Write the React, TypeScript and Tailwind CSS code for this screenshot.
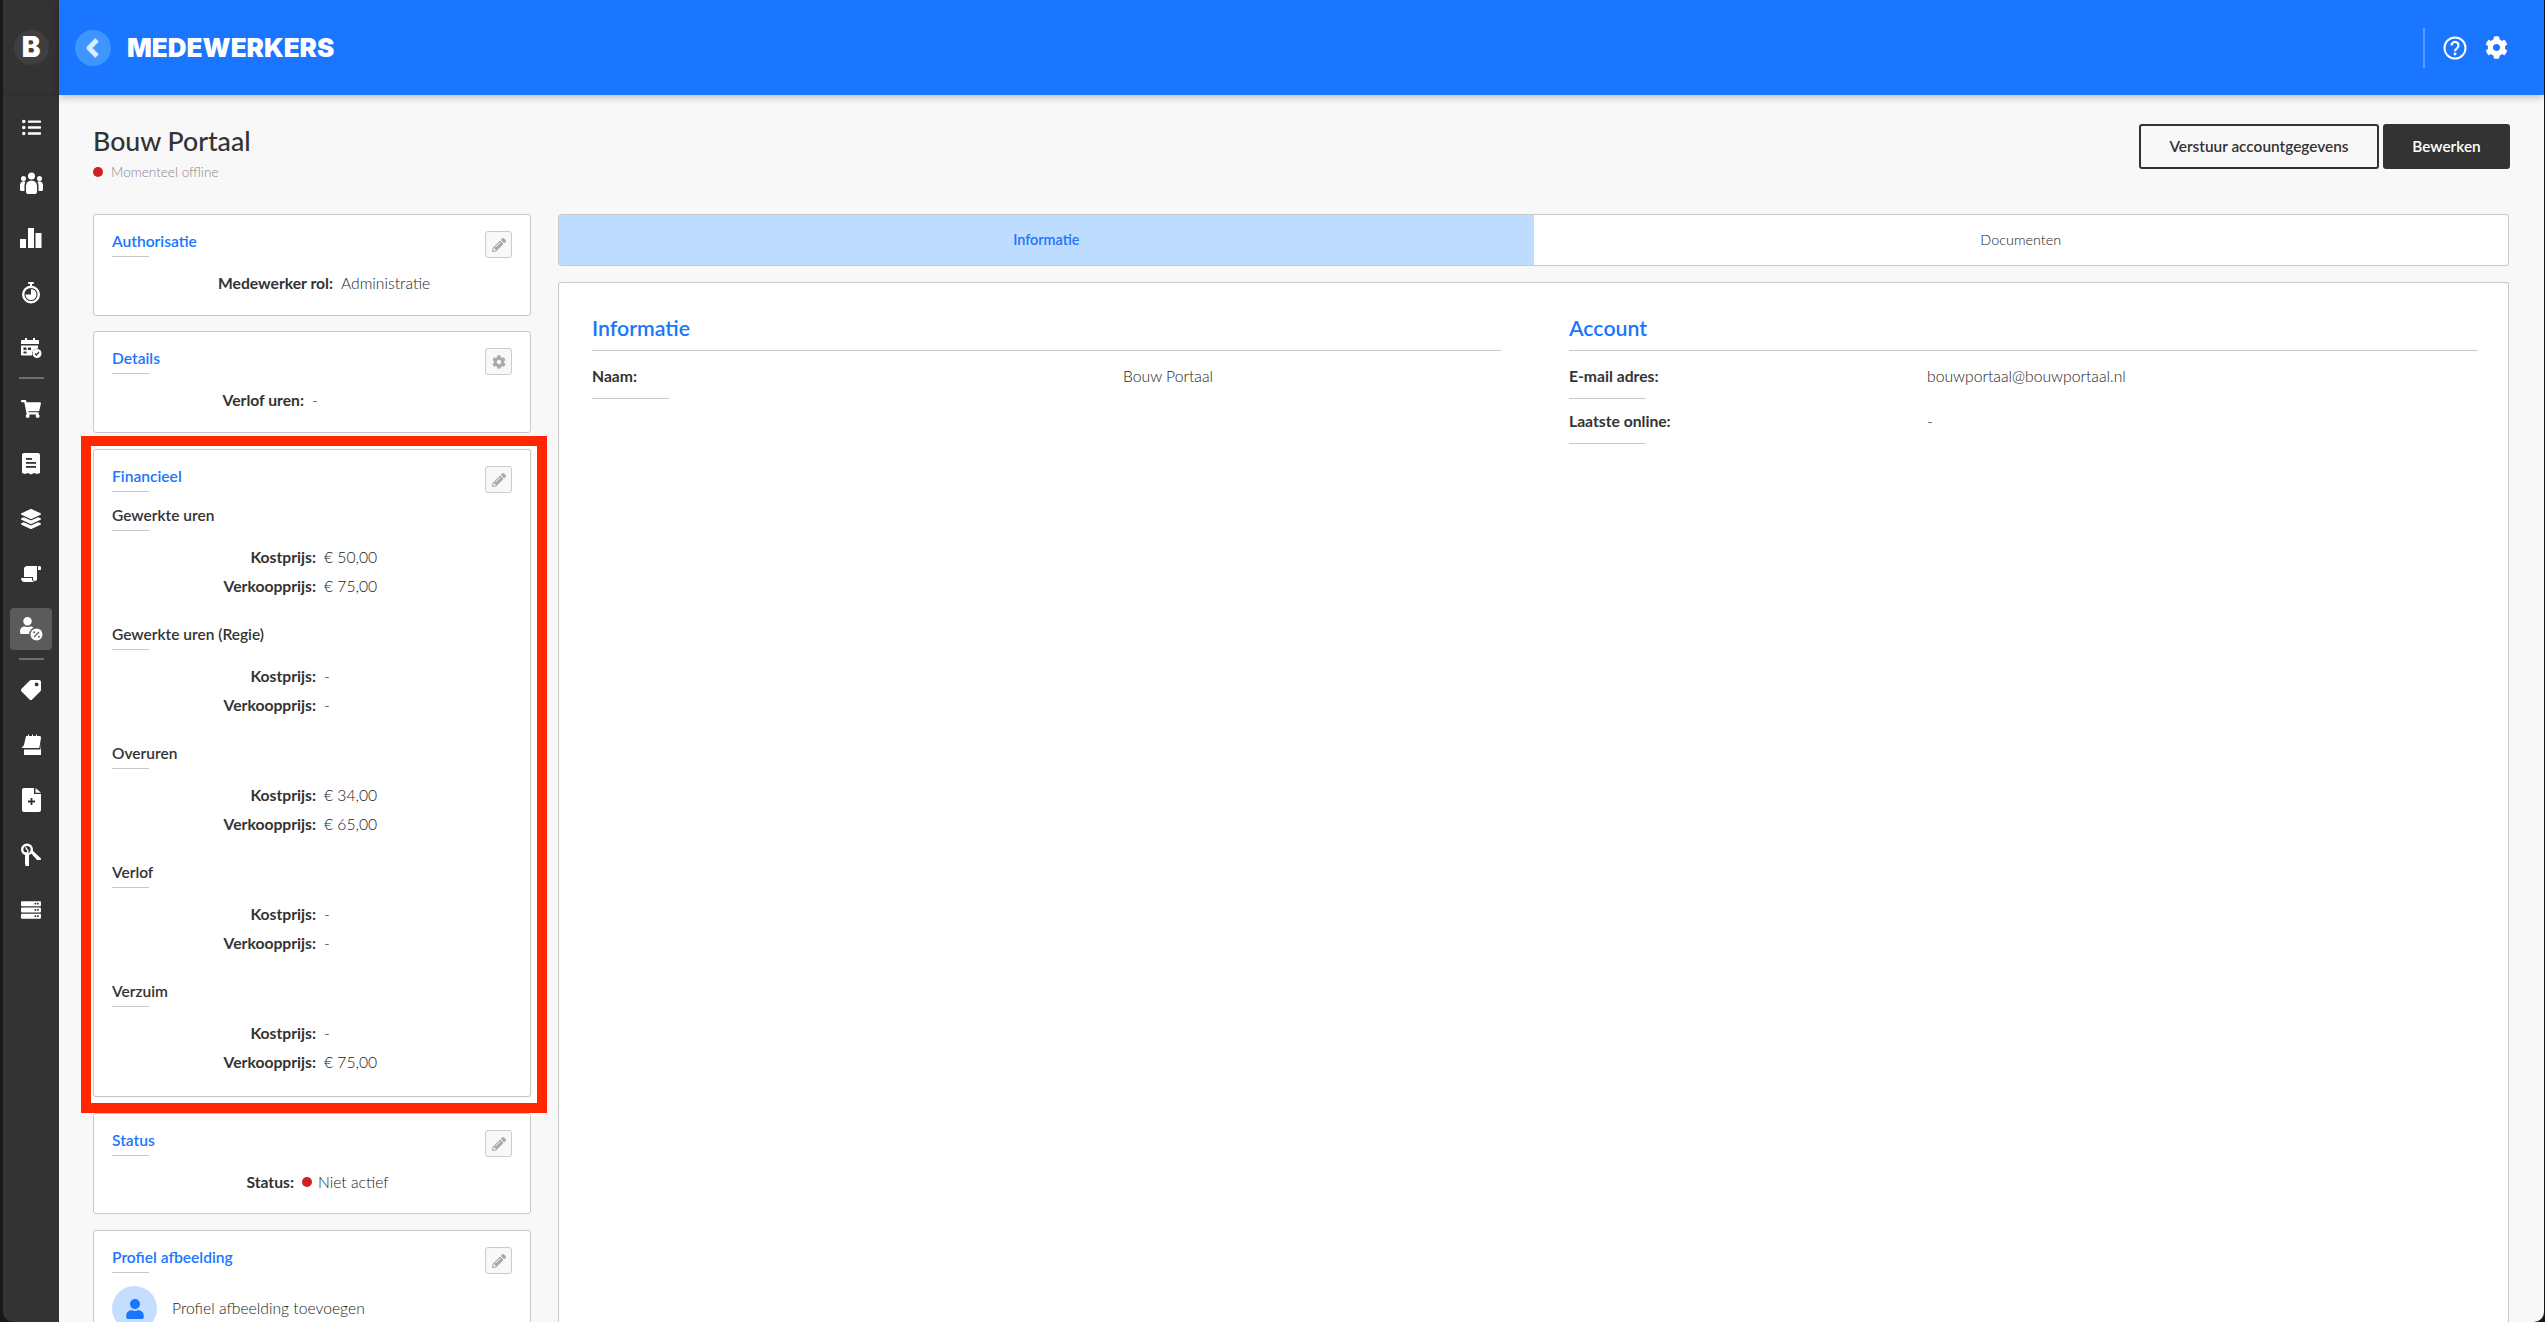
import type { ReactNode } from 'react'
import {
  FaListUl,
  FaShoppingCart,
  FaLayerGroup,
  FaScroll,
  FaUser,
  FaTag,
  FaServer,
  FaCog,
  FaPencilAlt,
} from 'react-icons/fa'

const font = 'font-["Lato","Noto_Sans",sans-serif]'

const UsersIcon = () => (
  <svg width="23" height="22" viewBox="0 0 23 22" fill="white">
    <circle cx="11.500" cy="4" r="3.500" />
    <circle cx="3.500" cy="6.500" r="2.500" />
    <circle cx="19.500" cy="6.500" r="2.500" />
    <path d="M6 14a5.500 5.500 0 0 1 11 0v6a2 2 0 0 1-2 2H8a2 2 0 0 1-2-2z" />
    <path d="M0 13a3.500 3.500 0 0 1 5.500-3A7 7 0 0 0 4.500 14v5H1.500A1.500 1.500 0 0 1 0 17.500z" />
    <path d="M23 13a3.500 3.500 0 0 0-5.500-3A7 7 0 0 1 18.500 14v5h3a1.500 1.500 0 0 0 1.500-1.500z" />
  </svg>
)

const BarsIcon = () => (
  <svg width="22" height="22" viewBox="0 0 22 22" fill="white">
    <rect x="0" y="12" width="6" height="9" />
    <rect x="8" y="1" width="6" height="20" />
    <rect x="15.500" y="6" width="6" height="15" />
  </svg>
)

const StopwatchIcon = () => (
  <svg width="22" height="22" viewBox="0 0 22 22" fill="none">
    <rect x="8" y="0" width="6" height="2" rx="1" fill="white" />
    <rect x="10" y="1" width="2" height="4" fill="white" />
    <circle cx="11" cy="12.500" r="7.800" stroke="white" strokeWidth="2.400" />
    <path d="M11 12.500V7a5.500 5.500 0 1 1-5.500 5.500z" fill="white" />
  </svg>
)

const CalendarCheckIcon = () => (
  <svg width="22" height="22" viewBox="0 0 22 22">
    <path d="M2 3h3V1h2v2h6V1h2v2h3a1 1 0 0 1 1 1v3H1V4a1 1 0 0 1 1-1z" fill="white" />
    <path d="M1 8.500h17v3a6 6 0 0 0-6 7H2a1 1 0 0 1-1-1z" fill="white" />
    <rect x="3.500" y="10.500" width="3" height="2.500" fill="#333" />
    <rect x="8" y="10.500" width="3" height="2.500" fill="#333" />
    <rect x="3.500" y="14.500" width="3" height="2" fill="#333" />
    <circle cx="17" cy="16.500" r="4.500" fill="white" />
    <path d="M15 16.500l1.500 1.500 2.500-3" stroke="#333" strokeWidth="1.200" fill="none" />
  </svg>
)

const ReceiptIcon = () => (
  <svg width="20" height="22" viewBox="0 0 20 22">
    <path
      d="M3 0h14a2 2 0 0 1 2 2v18l-3 1-3-1-3 1.500L7 20l-3 1-3-1V2a2 2 0 0 1 2-2z"
      fill="white"
    />
    <rect x="5" y="5" width="6" height="1.800" fill="#333" />
    <rect x="5" y="9" width="10" height="1.800" fill="#333" />
    <rect x="5" y="13" width="10" height="1.800" fill="#333" />
  </svg>
)

const UserPercentIcon = () => (
  <div className="relative w-[24px] h-[24px]">
    <FaUser className="absolute left-0 top-0 text-white" size={17} />
    <svg className="absolute right-[-1px] bottom-[-1px]" width="15" height="15" viewBox="0 0 15 15">
      <circle cx="7.500" cy="7.500" r="7.500" fill="#5b5b5b" />
      <circle cx="7.500" cy="7.500" r="6" fill="white" />
      <path d="M10 5l-5 5" stroke="#5b5b5b" strokeWidth="1.200" />
      <circle cx="5.200" cy="5.200" r="1" fill="#5b5b5b" />
      <circle cx="9.800" cy="9.800" r="1" fill="#5b5b5b" />
    </svg>
  </div>
)

const TearCalendarIcon = () => (
  <svg width="24" height="22" viewBox="0 0 24 22" fill="white">
    <path d="M5 2h2V0.500h1V2h3V0.500h1V2h3V0.500h1V2h3.500L20 4l-1.500 9a1 1 0 0 1-1 1H0.500L3 11z" transform="translate(2 0)" />
    <path d="M5 15.500h16.500l.5-6V21H5z" />
  </svg>
)

const FilePlusIcon = () => (
  <svg width="19" height="24" viewBox="0 0 19 24">
    <path d="M2 0h10v6h7v16a2 2 0 0 1-2 2H2a2 2 0 0 1-2-2V2a2 2 0 0 1 2-2z" fill="white" />
    <path d="M13.500 0L19 4.700h-5.500z" fill="white" />
    <path d="M9.500 10v7M6 13.500h7" stroke="#333" strokeWidth="1.800" />
  </svg>
)

const KeysIcon = () => (
  <svg width="22" height="24" viewBox="0 0 22 24" fill="none">
    <circle cx="7" cy="6.500" r="4.800" stroke="white" strokeWidth="2.400" />
    <path d="M4 9.500c2 1.500 4 0 4-1.500S5 5.500 6 4" stroke="white" strokeWidth="1.400" />
    <path d="M5 11h4v12H5.500L5 20z" fill="white" />
    <path d="M10 9l2-2 9 8.500a1.500 1.500 0 0 1-.5 1.500L17 17z" fill="white" />
  </svg>
)

type NavItem = { icon: ReactNode; active?: boolean }

const navTop: NavItem[] = [
  { icon: <FaListUl className="text-white" size={19} /> },
  { icon: <UsersIcon /> },
  { icon: <BarsIcon /> },
  { icon: <StopwatchIcon /> },
  { icon: <CalendarCheckIcon /> },
]

const navMiddle: NavItem[] = [
  { icon: <FaShoppingCart className="text-white" size={20} /> },
  { icon: <ReceiptIcon /> },
  { icon: <FaLayerGroup className="text-white" size={20} /> },
  { icon: <FaScroll className="text-white -scale-x-100" size={20} /> },
  { icon: <UserPercentIcon />, active: true },
]

const navBottom: NavItem[] = [
  { icon: <FaTag className="text-white rotate-90" size={20} /> },
  { icon: <TearCalendarIcon /> },
  { icon: <FilePlusIcon /> },
  { icon: <KeysIcon /> },
  { icon: <FaServer className="text-white" size={20} /> },
]

function NavButton({ item }: { item: NavItem }) {
  return (
    <div className="h-[55px] flex items-center justify-center">
      <div className={`w-[42px] h-[42px] rounded flex items-center justify-center ${item.active ? 'bg-[#5b5b5b]' : ''}`}>
        {item.icon}
      </div>
    </div>
  )
}

const NavDivider = () => <div className="h-[2px] w-[25px] my-[2px] mx-auto bg-[#6f6f6f]" />

function Sidebar() {
  return (
    <aside className="w-[56px] shrink-0 bg-[#333333] flex flex-col">
      <div className="h-[95px] flex items-center justify-center border-b border-[#2b2b2b]">
        <div className="w-[35px] h-[35px] rounded-full bg-[#3f3f3f] flex items-center justify-center text-white text-[28px] font-black leading-none font-['Inter',sans-serif]">
          B
        </div>
      </div>
      <nav className="pt-[5px]">
        {navTop.map((item, i) => <NavButton key={i} item={item} />)}
        <NavDivider />
        {navMiddle.map((item, i) => <NavButton key={i} item={item} />)}
        <NavDivider />
        {navBottom.map((item, i) => <NavButton key={i} item={item} />)}
      </nav>
    </aside>
  )
}

function Header() {
  return (
    <header className="h-[95px] shrink-0 bg-[#1a76ff] shadow-[0_2px_8px_rgba(0,0,0,0.25)] flex items-center pl-[16px] pr-[36px] relative z-10">
      <div className="w-[36px] h-[36px] rounded-full bg-[#3f95ff] flex items-center justify-center">
        <svg width="16" height="22" viewBox="0 0 16 22" fill="none">
          <path d="M12 3L4 11l8 8" stroke="#dcebff" strokeWidth="5" strokeLinejoin="round" />
        </svg>
      </div>
      <h1 className="ml-[16px] font-['Inter',sans-serif] font-black text-[26px] leading-none text-white">
        MEDEWERKERS
      </h1>
      <div className="ml-auto flex items-center">
        <div className="w-[2px] h-[40px] bg-[#5a9cff]" />
        <svg className="ml-[18px]" width="24" height="24" viewBox="0 0 24 24" fill="none">
          <circle cx="12" cy="12" r="10.500" stroke="white" strokeWidth="2" />
          <path d="M8.500 9.500a3.500 3.500 0 1 1 5.500 2.800c-1.300.9-2 1.500-2 2.900" stroke="white" strokeWidth="2.200" />
          <circle cx="12" cy="18" r="1.400" fill="white" />
        </svg>
        <FaCog className="ml-[18px] text-white" size={23} />
      </div>
    </header>
  )
}

function EditButton({ gear }: { gear?: boolean }) {
  return (
    <div className="w-[27px] h-[27px] rounded-[3px] border border-[#cccccc] bg-[#f8f8f8] flex items-center justify-center">
      {gear ? <FaCog className="text-[#aaaaaa]" size={14} /> : <FaPencilAlt className="text-[#aaaaaa]" size={14} />}
    </div>
  )
}

const Rule = () => <div className="mt-[5px] h-px w-[37px] bg-[#c8c8c8]" />

function Card({ title, gear, children, className = '' }: { title: string; gear?: boolean; children: ReactNode; className?: string }) {
  return (
    <section className={`relative bg-white border border-[#c8c8c8] rounded-[3px] pt-[16px] px-[18px] ${className}`}>
      <div className="flex items-start justify-between h-[27px]">
        <div>
          <h3 className="text-[15.600px] leading-[20px] font-semibold text-[#1a76ff]">{title}</h3>
          <Rule />
        </div>
        <EditButton gear={gear} />
      </div>
      {children}
    </section>
  )
}

function Row({ label, labelClass, children }: { label: string; labelClass: string; children: ReactNode }) {
  return (
    <div className="flex h-[29px] items-center text-[15.700px]">
      <span className={`${labelClass} shrink-0 text-right font-bold text-[#333333]`}>{label}</span>
      <span className="ml-[8px] flex items-center font-light text-[#222222]">{children}</span>
    </div>
  )
}

const prices = [
  { title: 'Gewerkte uren', cost: '€ 50,00', sale: '€ 75,00' },
  { title: 'Gewerkte uren (Regie)', cost: '-', sale: '-' },
  { title: 'Overuren', cost: '€ 34,00', sale: '€ 65,00' },
  { title: 'Verlof', cost: '-', sale: '-' },
  { title: 'Verzuim', cost: '-', sale: '€ 75,00' },
]

function LeftColumn() {
  return (
    <div className="w-[438px] shrink-0 flex flex-col">
      <Card title="Authorisatie" className="pb-[17px]">
        <div className="mt-[11px]">
          <Row label="Medewerker rol:" labelClass="w-[221px]">Administratie</Row>
        </div>
      </Card>
      <Card title="Details" gear className="mt-[15px] pb-[17px]">
        <div className="mt-[11px]">
          <Row label="Verlof uren:" labelClass="w-[192px]">-</Row>
        </div>
      </Card>
      <Card title="Financieel" className="mt-[16px] pb-[19px]">
        <div className="mt-[12px] flex flex-col gap-[23px]">
          {prices.map(p => (
            <div key={p.title}>
              <h4 className="text-[15.500px] leading-[20px] font-semibold text-[#333333]">{p.title}</h4>
              <Rule />
              <div className="mt-[12px]">
                <Row label="Kostprijs:" labelClass="w-[204px]">{p.cost}</Row>
                <Row label="Verkoopprijs:" labelClass="w-[204px]">{p.sale}</Row>
              </div>
            </div>
          ))}
        </div>
        {/* red marker drawn over the card */}
        <div className="absolute top-[-14px] left-[-13px] right-[-17px] bottom-[-17px] border-[10px] border-[#ff2600] pointer-events-none">
          <div className="w-full h-full border-t-[2px] border-l-[2px] border-r-[5px] border-b-[5px] border-white" />
        </div>
      </Card>
      <Card title="Status" className="mt-[16px] pb-[16px]">
        <div className="mt-[11px]">
          <Row label="Status:" labelClass="w-[182px]">
            <span className="w-[10px] h-[10px] rounded-full bg-[#d0201f] mr-[6px]" />
            Niet actief
          </Row>
        </div>
      </Card>
      <Card title="Profiel afbeelding" className="mt-[16px] pb-[15px]">
        <div className="mt-[12px] flex items-center">
          <div className="w-[45px] h-[45px] rounded-full bg-[#c3deff] flex items-center justify-center">
            <FaUser className="text-[#1a76ff]" size={20} />
          </div>
          <span className="ml-[15px] text-[15.700px] font-light text-[#222222]">Profiel afbeelding toevoegen</span>
        </div>
      </Card>
    </div>
  )
}

function InfoRow({ label, value, valueClass }: { label: string; value: string; valueClass: string }) {
  return (
    <div className="h-[45px] pt-[12px]">
      <div className="flex text-[15.700px] leading-[20px]">
        <span className={`${valueClass} shrink-0 font-bold text-[#333333]`}>{label}</span>
        <span className="font-light text-[#222222]">{value}</span>
      </div>
      <div className="mt-[12px] h-px w-[77px] bg-[#c8c8c8]" />
    </div>
  )
}

function InfoBlock({ title, children }: { title: string; children: ReactNode }) {
  return (
    <div className="flex-1">
      <h2 className="text-[21.300px] leading-[28px] font-semibold text-[#1a76ff] border-b border-[#c8c8c8] pb-[8px]">{title}</h2>
      <div className="pt-[3px]">{children}</div>
    </div>
  )
}

function RightColumn() {
  return (
    <div className="flex-1 min-w-0 flex flex-col">
      <div className="h-[52px] flex text-[14.400px] rounded-[3px] border border-[#c8c8c8] bg-white overflow-hidden">
        <div className="flex-1 flex items-center justify-center bg-[#bddcff] font-semibold text-[#1a76ff]">Informatie</div>
        <div className="flex-1 flex items-center justify-center font-light text-[#222222]">Documenten</div>
      </div>
      <div className="mt-[16px] flex-1 bg-white border border-[#c8c8c8] rounded-t-[3px] border-b-0 pt-[31px] pl-[33px] pr-[30px] flex gap-[68px]">
        <InfoBlock title="Informatie">
          <InfoRow label="Naam:" value="Bouw Portaal" valueClass="w-[531px]" />
        </InfoBlock>
        <InfoBlock title="Account">
          <InfoRow label="E-mail adres:" value="bouwportaal@bouwportaal.nl" valueClass="w-[358px]" />
          <InfoRow label="Laatste online:" value="-" valueClass="w-[358px]" />
        </InfoBlock>
      </div>
    </div>
  )
}

export default function App() {
  return (
    <div className={`h-[1322px] w-[2545px] overflow-hidden bg-[#15191c] pl-[3px] pr-[1px] ${font}`}>
      <div className="h-full flex rounded-b-[10px] overflow-hidden">
        <Sidebar />
        <div className="flex-1 min-w-0 flex flex-col bg-[#f8f8f8]">
          <Header />
          <main className="flex-1 min-h-0 overflow-hidden pl-[34px] pr-[35px]">
            <div className="h-[119px] flex items-start justify-between pt-[29px]">
              <div>
                <h2 className="text-[26.700px] leading-[34px] font-medium text-[#333333]">Bouw Portaal</h2>
                <div className="mt-[6px] flex items-center text-[13.600px] leading-[16px] font-light text-[#888888]">
                  <span className="w-[10px] h-[10px] rounded-full bg-[#d0201f] mr-[8px]" />
                  Momenteel offline
                </div>
              </div>
              <div className="flex gap-[4px] -mr-[1px]">
                <button className="h-[45px] w-[240px] rounded-[3px] border-2 border-[#333333] text-[15.400px] font-semibold text-[#333333]">
                  Verstuur accountgegevens
                </button>
                <button className="h-[45px] w-[127px] rounded-[3px] bg-[#333333] text-[15.400px] font-semibold text-white">
                  Bewerken
                </button>
              </div>
            </div>
            <div className="flex gap-[27px] h-[1200px]">
              <LeftColumn />
              <RightColumn />
            </div>
          </main>
        </div>
      </div>
    </div>
  )
}
